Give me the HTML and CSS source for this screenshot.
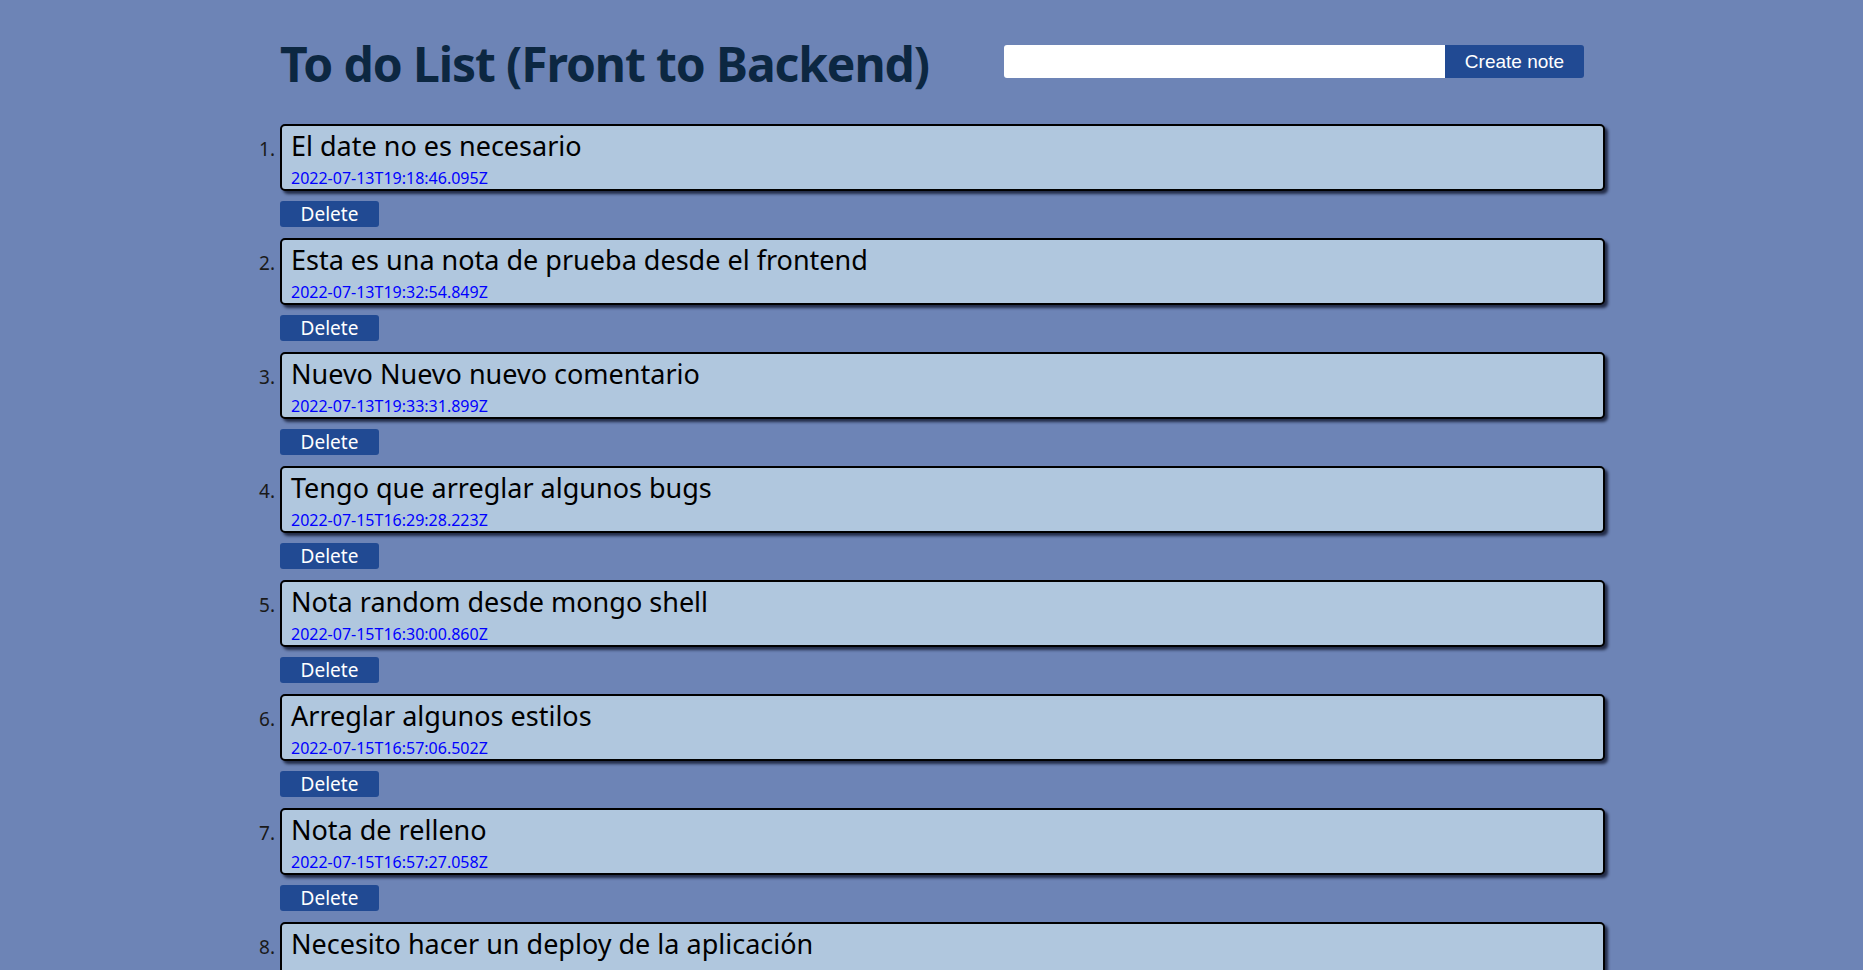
FILE: index.html
```html
<!DOCTYPE html>
<html lang="es">
<head>
<meta charset="utf-8">
<title>To do List</title>
<link rel="stylesheet" href="styles.css">
</head>
<body>
<div class="page">
  <header class="header">
    <h1 class="title">To do List (Front to Backend)</h1>
    <form class="note-form">
      <input class="note-input" type="text">
      <button class="create-btn" type="button">Create note</button>
    </form>
  </header>
  <ol class="notes">
    <li class="note">
      <div class="card"><div class="card-text">El date no es necesario</div><div class="card-date">2022-07-13T19:18:46.095Z</div></div>
      <button class="delete-btn" type="button">Delete</button>
    </li>
    <li class="note">
      <div class="card"><div class="card-text">Esta es una nota de prueba desde el frontend</div><div class="card-date">2022-07-13T19:32:54.849Z</div></div>
      <button class="delete-btn" type="button">Delete</button>
    </li>
    <li class="note">
      <div class="card"><div class="card-text">Nuevo Nuevo nuevo comentario</div><div class="card-date">2022-07-13T19:33:31.899Z</div></div>
      <button class="delete-btn" type="button">Delete</button>
    </li>
    <li class="note">
      <div class="card"><div class="card-text">Tengo que arreglar algunos bugs</div><div class="card-date">2022-07-15T16:29:28.223Z</div></div>
      <button class="delete-btn" type="button">Delete</button>
    </li>
    <li class="note">
      <div class="card"><div class="card-text">Nota random desde mongo shell</div><div class="card-date">2022-07-15T16:30:00.860Z</div></div>
      <button class="delete-btn" type="button">Delete</button>
    </li>
    <li class="note">
      <div class="card"><div class="card-text">Arreglar algunos estilos</div><div class="card-date">2022-07-15T16:57:06.502Z</div></div>
      <button class="delete-btn" type="button">Delete</button>
    </li>
    <li class="note">
      <div class="card"><div class="card-text">Nota de relleno</div><div class="card-date">2022-07-15T16:57:27.058Z</div></div>
      <button class="delete-btn" type="button">Delete</button>
    </li>
    <li class="note">
      <div class="card"><div class="card-text">Necesito hacer un deploy de la aplicación</div><div class="card-date">2022-07-18T10:12:40.311Z</div></div>
      <button class="delete-btn" type="button">Delete</button>
    </li>
  </ol>
</div>
</body>
</html>
```
FILE: styles.css
```css
html, body {
  margin: 0;
  padding: 0;
  background: #6d84b6;
  overflow: hidden;
}
body {
  font-family: "Noto Sans", "Open Sans", sans-serif;
}
.page {
  width: 1325px;
  padding-left: 280px;
}
.header {
  display: flex;
  align-items: flex-start;
  height: 124px;
}
.title {
  margin: 40px 0 0;
  font-size: 48px;
  font-weight: 700;
  color: #0c2741;
  line-height: 1;
  letter-spacing: -1.1px;
}
.note-form {
  display: flex;
  margin: 45px 21px 0 auto;
}
.note-input {
  width: 441px;
  height: 33px;
  box-sizing: border-box;
  border: none;
  border-radius: 3px 0 0 3px;
  background: #fff;
  padding: 0 8px;
  margin: 0;
}
.create-btn {
  width: 139px;
  height: 33px;
  border: none;
  margin: 0;
  border-radius: 0 3px 3px 0;
  background: #214a93;
  color: #fff;
  font-family: "Liberation Sans", Arial, sans-serif;
  font-size: 19px;
  cursor: pointer;
}
.notes {
  margin: 0;
  padding: 0;
  list-style: decimal outside;
  color: #111;
}
.note {
  font-size: 20px;
  padding-bottom: 11px;
}
.note::marker {
  font-size: 19px;
  color: #1a1a1a;
}
.card {
  height: 67px;
  box-sizing: border-box;
  border: 2px solid #000;
  border-radius: 5px;
  background: #b0c7de;
  box-shadow: 3px 3px 3px rgba(10, 15, 35, 0.75);
  padding: 4px 9px 0;
  overflow: hidden;
}
.card-text {
  font-size: 27px;
  line-height: 32px;
  color: #000;
}
.card-date {
  font-size: 16px;
  line-height: 22px;
  margin-top: 5px;
  color: #0000ff;
}
.delete-btn {
  display: block;
  margin-top: 10px;
  width: 99px;
  height: 26px;
  border: none;
  border-radius: 3px;
  background: #214a93;
  color: #fff;
  font-family: "Noto Sans", "Open Sans", sans-serif;
  font-size: 19px;
  line-height: 26px;
  padding: 0;
  cursor: pointer;
}
```
